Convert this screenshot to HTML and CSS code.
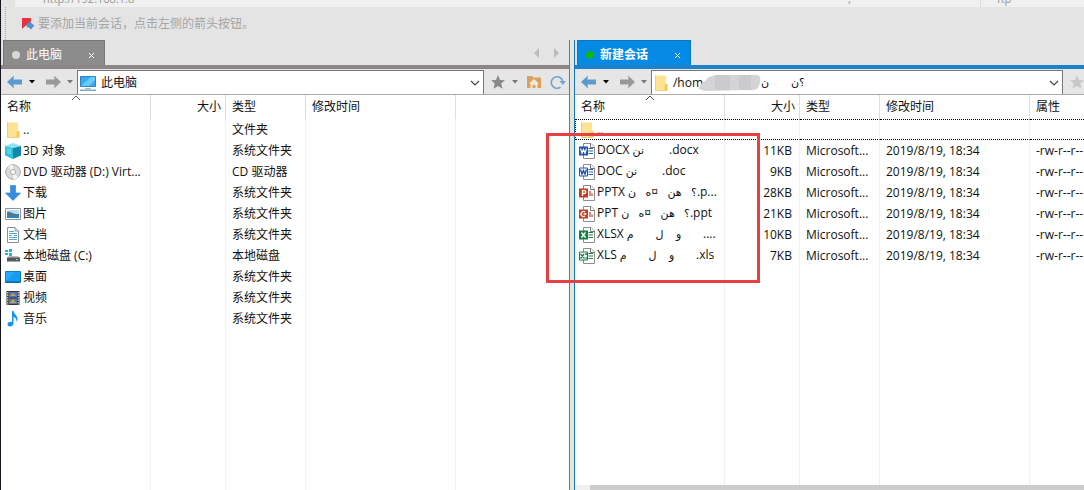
FILE: index.html
```html
<!DOCTYPE html>
<html lang="zh-CN">
<head>
<meta charset="utf-8">
<title>新建会话</title>
<link rel="stylesheet" href="styles.css">
</head>
<body>
<svg width="0" height="0" class="defs" aria-hidden="true">
  <symbol id="arrow" viewBox="0 0 16 14"><path d="M0 7 7 0.5 6.4 4.5H15V9.5H6.4L7 13.5Z"/></symbol>
  <symbol id="star" viewBox="0 0 14 14"><path d="M7 0 9 4.9 14 5.3 10.2 8.6 11.5 13.8 7 11 2.5 13.8 3.8 8.6 0 5.3 5 4.9Z"/></symbol>
  <symbol id="caret" viewBox="0 0 6 4"><path d="M0 0H6L3 3.6Z"/></symbol>
  <symbol id="chev" viewBox="0 0 10 6"><path d="M1 1 5 5 9 1" fill="none" stroke="#444" stroke-width="1.2"/></symbol>
  <symbol id="folder" viewBox="0 0 16 16"><path d="M2 0.5H13V9H14.500V15.500H2Z" fill="#ffe391"/><path d="M12.500 9h2v6.500h-3V11z" fill="#f3cb62"/><path d="M2.500 .5V15.500H14" fill="none" stroke="#f0cf70"/></symbol>
  <symbol id="page" viewBox="0 0 16 16"><path d="M4.500 .5H12L15.500 4V15.500H4.500Z" fill="#fff" stroke="#8d8d8d"/><path d="M11.500 .5V4.500H15.500" fill="#fff" stroke="#777"/></symbol>
</svg>
<div class="app">
  <div class="address">
    <span class="url">http://192.168.1.8</span><span class="mid">,</span><span class="pw">ftp</span>
  </div>
  <div class="hint">
    <svg width="14" height="14" viewBox="0 0 14 14"><path d="M1 1H10V12L5.500 8 1 12Z" fill="#e8323e"/><path d="M5 8 9.500 3.500V5.500L13.500 8.500 9.500 13V10.500H6.500Z" fill="#4f92cf"/></svg>
    <span>要添加当前会话，点击左侧的箭头按钮。</span>
  </div>
  <main class="panes">
    <section class="pane local">
      <div class="tabs">
        <div class="tab"><i class="dot"></i><span>此电脑</span><button aria-label="关闭"><svg width="7" height="7" viewBox="0 0 7 7"><path d="M1 1 6 6M6 1 1 6" stroke="#fff"/></svg></button></div>
        <div class="scroll">
          <button aria-label="左"><svg width="6" height="10" viewBox="0 0 6 10"><path d="M5 0V10L0 5Z" fill="#bbb"/></svg></button>
          <button aria-label="右"><svg width="6" height="10" viewBox="0 0 6 10"><path d="M0 0V10L5 5Z" fill="#bbb"/></svg></button>
        </div>
      </div>
      <div class="toolbar">
        <div class="nav">
          <button aria-label="后退"><svg class="back" width="16" height="14"><use href="#arrow"/></svg></button>
          <button aria-label="后退历史"><svg width="6" height="4"><use href="#caret"/></svg></button>
          <button aria-label="前进"><svg class="fwd" width="16" height="14"><use href="#arrow"/></svg></button>
          <button aria-label="前进历史"><svg class="dim" width="6" height="4"><use href="#caret"/></svg></button>
        </div>
        <div class="path">
          <svg width="18" height="16" viewBox="0 0 18 16"><path d="M1.500 1.500H16.500V11.500H1.500Z" fill="#35adf3" stroke="#3282b5"/><path d="M2 11 12 2H16V5L10 11Z" fill="#6bcbfb"/><path d="M6 13.500H12" stroke="#a5bdca"/><path d="M1 15.200H17" stroke="#5894b5" stroke-width="1.200"/></svg>
          <input aria-label="本地路径" value="此电脑">
          <button aria-label="展开"><svg width="10" height="6"><use href="#chev"/></svg></button>
        </div>
        <div class="tools">
          <button aria-label="书签"><svg class="star" width="14" height="14"><use href="#star"/></svg></button>
          <button aria-label="书签列表"><svg class="dim" width="6" height="4"><use href="#caret"/></svg></button>
          <button class="home" aria-label="主文件夹"><svg width="14" height="12" viewBox="0 0 14 12"><path d="M0 0H5L6 1.500H14V12H0Z" fill="#d9a05e"/><path d="M7 3 12 7.500H10.500V12H8.500V9H5.500V12H3.500V7.500H2Z" fill="#f5e7d4"/></svg></button>
          <button class="home" aria-label="刷新"><svg width="16" height="14" viewBox="0 0 16 14"><path d="M10.500 12.200A5.800 5.800 0 1 1 12.800 6.500" fill="none" stroke="#71a5cf" stroke-width="1.600"/><path d="M9.500 6H16L12.800 10Z" fill="#71a5cf"/></svg></button>
        </div>
      </div>
      <div class="list">
        <svg class="sort" width="10" height="6" viewBox="0 0 10 6"><path d="M1 5 5 1 9 5" fill="none" stroke="#555"/></svg>
        <table>
          <colgroup><col class="c-name"><col class="c-size"><col class="c-type"><col class="c-date"><col></colgroup>
          <thead><tr><th>名称</th><th class="num">大小</th><th>类型</th><th>修改时间</th><th></th></tr></thead>
          <tbody>
            <tr><td><span class="file"><svg width="16" height="16"><use href="#folder"/></svg>..</span></td><td></td><td>文件夹</td><td></td><td></td></tr>
            <tr><td><span class="file"><svg width="16" height="16" viewBox="0 0 16 16"><path d="M0 3 8 0 16 3 8 5Z" fill="#8de5f4"/><path d="M0 3 8 5V16L0 12.500Z" fill="#2fc0dc"/><path d="M8 5 16 3V12.500L8 16Z" fill="#1687ac"/><path d="M2 5 6 6V12L2 10Z" fill="#55d4e8"/></svg>3D 对象</span></td><td></td><td>系统文件夹</td><td></td><td></td></tr>
            <tr><td><span class="file"><svg width="16" height="16" viewBox="0 0 16 16"><circle cx="8" cy="8" r="7.300" fill="#d9d9d9" stroke="#a8a8a8"/><path d="M8 8 3 2.500A7 7 0 0 1 8 1ZM8 8 13 13.500A7 7 0 0 1 8 15Z" fill="#f4f4f4"/><circle cx="8" cy="8" r="2.500" fill="#fff" stroke="#aaa"/></svg>DVD 驱动器 (D:) Virt...</span></td><td></td><td>CD 驱动器</td><td></td><td></td></tr>
            <tr><td><span class="file"><svg width="16" height="16" viewBox="0 0 16 16"><path d="M5.500 .5H10.500V8H15.500L8 15.500 .5 8H5.500Z" fill="#348de0" stroke="#2678c8" stroke-width=".6"/></svg>下载</span></td><td></td><td>系统文件夹</td><td></td><td></td></tr>
            <tr><td><span class="file"><svg width="16" height="16" viewBox="0 0 16 16"><path d="M.5 2.500H15.500V13.500H.5Z" fill="#fff" stroke="#8a9298"/><path d="M2 4H14V12H2Z" fill="#b7dcf1"/><path d="M2 6C6 5 8 9 14 8V12H2Z" fill="#4a7994"/><path d="M2 10H14V12H2Z" fill="#2d86bd"/></svg>图片</span></td><td></td><td>系统文件夹</td><td></td><td></td></tr>
            <tr><td><span class="file"><svg width="16" height="16" viewBox="0 0 16 16"><path d="M2.500 .5H10L13.500 4V15.500H2.500Z" fill="#fff" stroke="#87939b"/><path d="M10 .5V4H13.500" fill="none" stroke="#87939b"/><path d="M4 4.500H9M4 6.500H12M4 8.500H7M9 8.500H12M4 10.500H12M4 12.500H12" stroke="#58a5d0"/></svg>文档</span></td><td></td><td>系统文件夹</td><td></td><td></td></tr>
            <tr><td><span class="file"><svg width="16" height="16" viewBox="0 0 16 16"><path d="M0 2H3V4H0ZM4 1H7V4H4ZM0 5H3V7H0ZM4 5H7V8H4Z" fill="#20b2d8"/><path d="M4 8H13L15 10H2Z" fill="#b9bcbd"/><path d="M2 9.500H15V13.500H2Z" fill="#53585a"/><path d="M11 11.500H13" stroke="#7fea7b"/></svg>本地磁盘 (C:)</span></td><td></td><td>本地磁盘</td><td></td><td></td></tr>
            <tr><td><span class="file"><svg width="16" height="16" viewBox="0 0 16 16"><path d="M.5 2.500H15.500V13.500H.5Z" fill="#159bf0" stroke="#1678bd"/><path d="M1 12V3H10Z" fill="#22aaff"/><path d="M1 13H15" stroke="#0b5e9d"/></svg>桌面</span></td><td></td><td>系统文件夹</td><td></td><td></td></tr>
            <tr><td><span class="file"><svg width="16" height="16" viewBox="0 0 16 16"><path d="M1.500 1H14.500V15H1.500Z" fill="#353535"/><path d="M2.800 2V15M13.200 2V15" stroke="#fff" stroke-dasharray="1.500 1"/><path d="M4 2H12V7.500H4Z" fill="#4c75b9"/><path d="M4 8.500H12V14H4Z" fill="#587aa8"/><path d="M5 6 8 3 11 6ZM5 13 8 9 11 13Z" fill="#d1a243"/></svg>视频</span></td><td></td><td>系统文件夹</td><td></td><td></td></tr>
            <tr><td><span class="file"><svg width="16" height="16" viewBox="0 0 16 16"><path d="M7 0H8.500C9 3 13 4.500 12.500 9L11.500 10.500C11.500 7.500 10 6.500 8.500 6V12.500C8.500 16 2.500 16.500 2.500 13.500 2.500 11 5 10.500 7 11Z" fill="#1a93e6"/></svg>音乐</span></td><td></td><td>系统文件夹</td><td></td><td></td></tr>
            <tr class="fill"><td></td><td></td><td></td><td></td><td></td></tr>
          </tbody>
        </table>
      </div>
    </section>
    <section class="pane remote">
      <div class="tabs">
        <div class="tab"><i class="dot"></i><span>新建会话</span><button aria-label="关闭"><svg width="7" height="7" viewBox="0 0 7 7"><path d="M1 1 6 6M6 1 1 6" stroke="#fff"/></svg></button></div>
      </div>
      <div class="toolbar">
        <div class="nav">
          <button aria-label="后退"><svg class="back" width="16" height="14"><use href="#arrow"/></svg></button>
          <button aria-label="后退历史"><svg width="6" height="4"><use href="#caret"/></svg></button>
          <button aria-label="前进"><svg class="fwd" width="16" height="14"><use href="#arrow"/></svg></button>
          <button aria-label="前进历史"><svg class="dim" width="6" height="4"><use href="#caret"/></svg></button>
        </div>
        <div class="path">
          <svg width="16" height="16"><use href="#folder"/></svg>
          <div class="crumb">/hom<svg class="smudge" width="62" height="18" viewBox="0 0 62 18"><path d="M0 15C1 9 4 9 7 6 10 1 18 1 24 1H54C61 0 62 3 61 8 60 14 58 17 50 16L6 17Z" fill="#d4d4d6"/><path d="M16 1H31V16H16ZM40 1H52V16H40Z" fill="#cbcbcd"/></svg><bdi>ن</bdi>&nbsp;&nbsp;&nbsp;&nbsp;&nbsp;&nbsp;&nbsp;<bdi>ن</bdi><bdi>؟</bdi></div>
          <button aria-label="展开"><svg width="10" height="6"><use href="#chev"/></svg></button>
        </div>
        <div class="tools"><button aria-label="书签"><svg class="star off" width="14" height="14"><use href="#star"/></svg></button></div>
      </div>
      <div class="list">
        <svg class="sort" width="10" height="6" viewBox="0 0 10 6"><path d="M1 5 5 1 9 5" fill="none" stroke="#555"/></svg>
        <table>
          <colgroup><col class="c-name"><col class="c-size"><col class="c-type"><col class="c-date"><col></colgroup>
          <thead><tr><th>名称</th><th class="num">大小</th><th>类型</th><th>修改时间</th><th>属性</th></tr></thead>
          <tbody>
            <tr class="focus"><td><span class="file"><svg width="16" height="16"><use href="#folder"/></svg>..</span></td><td></td><td></td><td></td><td></td></tr>
            <tr><td><span class="file"><svg width="16" height="16" viewBox="0 0 16 16"><use href="#page"/><path d="M9.500 5.500H14M9.500 8H14M9.500 10.500H14" stroke="#2b5fb5"/><path d="M0 3.500H9V12.500H0Z" fill="#1f55b0"/><path d="M1.500 5.500 3 10 4.500 6.500 6 10 7.500 5.500" fill="none" stroke="#fff" stroke-width="1.200"/></svg><span>DOCX <bdi>نن</bdi>&nbsp;&nbsp;&nbsp;&nbsp;&nbsp;&nbsp;&nbsp;&nbsp;.docx</span></span></td><td class="num">11KB</td><td>Microsoft...</td><td>2019/8/19, 18:34</td><td>-rw-r--r--</td></tr>
            <tr><td><span class="file"><svg width="16" height="16" viewBox="0 0 16 16"><use href="#page"/><path d="M9.500 5.500H14M9.500 8H14M9.500 10.500H14" stroke="#2b5fb5"/><path d="M.5 4H8.500V12H.5Z" fill="#fff" stroke="#1f55b0"/><path d="M1.500 5.500 3 10 4.500 6.500 6 10 7.500 5.500" fill="none" stroke="#1f55b0" stroke-width="1.400"/></svg><span>DOC <bdi>نن</bdi>&nbsp;&nbsp;&nbsp;&nbsp;&nbsp;&nbsp;&nbsp;&nbsp;.doc</span></span></td><td class="num">9KB</td><td>Microsoft...</td><td>2019/8/19, 18:34</td><td>-rw-r--r--</td></tr>
            <tr><td><span class="file"><svg width="16" height="16" viewBox="0 0 16 16"><use href="#page"/><path d="M10 6V11H14V8.500H12V6Z" fill="#e2897a"/><path d="M0 3.500H9V12.500H0Z" fill="#c43d20"/><path d="M3.500 11V5.700H5.500C7.200 5.700 7.200 8.500 5.500 8.500H3.500" fill="none" stroke="#fff" stroke-width="1.300"/></svg><span>PPTX <bdi>ن</bdi>&nbsp;&nbsp;&nbsp;<bdi>ه</bdi>¤&nbsp;&nbsp;&nbsp;<bdi>هن</bdi>&nbsp;&nbsp;&nbsp;<bdi>؟</bdi>.p...</span></span></td><td class="num">28KB</td><td>Microsoft...</td><td>2019/8/19, 18:34</td><td>-rw-r--r--</td></tr>
            <tr><td><span class="file"><svg width="16" height="16" viewBox="0 0 16 16"><use href="#page"/><path d="M10 6V11H14V8.500H12V6Z" fill="#e2897a"/><path d="M0 3.500H9V12.500H0Z" fill="#c43d20"/><path d="M6 6A2.500 2.500 0 1 0 6 10M4.500 8H7.500" fill="none" stroke="#fff" stroke-width="1.300"/></svg><span>PPT <bdi>ن</bdi>&nbsp;&nbsp;&nbsp;<bdi>ه</bdi>¤&nbsp;&nbsp;&nbsp;<bdi>هن</bdi>&nbsp;&nbsp;&nbsp;<bdi>؟</bdi>.ppt</span></span></td><td class="num">21KB</td><td>Microsoft...</td><td>2019/8/19, 18:34</td><td>-rw-r--r--</td></tr>
            <tr><td><span class="file"><svg width="16" height="16" viewBox="0 0 16 16"><use href="#page"/><path d="M9.500 5.500H14M9.500 8H14M9.500 10.500H14" stroke="#21803f"/><path d="M0 3.500H9V12.500H0Z" fill="#128044"/><path d="M2.500 5.500 6.500 10.500M6.500 5.500 2.500 10.500" stroke="#fff" stroke-width="1.400"/></svg><span>XLSX <bdi>م</bdi>&nbsp;&nbsp;&nbsp;&nbsp;&nbsp;&nbsp;&nbsp;<bdi>ل</bdi>&nbsp;&nbsp;&nbsp;&nbsp;<bdi>و</bdi>&nbsp;&nbsp;&nbsp;&nbsp;&nbsp;&nbsp;&nbsp;....</span></span></td><td class="num">10KB</td><td>Microsoft...</td><td>2019/8/19, 18:34</td><td>-rw-r--r--</td></tr>
            <tr><td><span class="file"><svg width="16" height="16" viewBox="0 0 16 16"><use href="#page"/><path d="M9.500 5.500H14M9.500 8H14M9.500 10.500H14" stroke="#21803f"/><path d="M.5 4H8.500V12H.5Z" fill="#fff" stroke="#128044"/><path d="M1.500 6 5.500 10.500M5 6 1.500 10.500M6 6H8M6.500 10H8" stroke="#128044" stroke-width="1.300"/></svg><span>XLS <bdi>م</bdi>&nbsp;&nbsp;&nbsp;&nbsp;&nbsp;&nbsp;&nbsp;<bdi>ل</bdi>&nbsp;&nbsp;&nbsp;&nbsp;<bdi>و</bdi>&nbsp;&nbsp;&nbsp;&nbsp;&nbsp;&nbsp;&nbsp;.xls</span></span></td><td class="num">7KB</td><td>Microsoft...</td><td>2019/8/19, 18:34</td><td>-rw-r--r--</td></tr>
            <tr class="fill"><td></td><td></td><td></td><td></td><td></td></tr>
          </tbody>
        </table>
      </div>
      <div class="hscroll"><i></i></div>
      <div class="highlight"></div>
    </section>
  </main>
</div>
</body>
</html>
```
FILE: styles.css
```css
* { box-sizing: border-box; }
body {
  margin: 0;
  font: 12px/16px "Open Sans", "Noto Sans CJK SC", "DejaVu Sans", sans-serif;
  color: #111;
  background: #e4e4e4;
}
.defs { position: absolute; }
svg { display: block; flex: none; }
button { border: 0; padding: 0; background: none; display: flex; align-items: center; flex: none; }
bdi { font-family: "DejaVu Sans", sans-serif; font-size: 11px; }
.app { height: 100vh; display: flex; flex-direction: column; overflow: hidden; border-left: 1px solid #15151f; }
.address {
  flex: none; height: 7px; margin-left: 14px; padding: 0 0 0 28px;
  display: flex; align-items: flex-end; overflow: hidden; background: #f0f0f0; color: #999; font-size: 11px;
}
.url { flex: 1; }
.mid { width: 132px; }
.pw { width: 104px; border-left: 1px solid #ddd; padding-left: 16px; }
.hint {
  flex: none; height: 33px; padding-left: 15px; margin-left: 4px; border-left: 1px dotted #aaa;
  display: flex; align-items: center; gap: 3px; color: #a5a5a5;
}
.panes { flex: 1; min-height: 0; display: flex; gap: 4px; }
.pane { position: relative; min-width: 0; display: flex; flex-direction: column; }
.local { flex: 569; border-right: 1px solid #777; }
.remote { flex: 510; border-left: 1px solid #1177bb; }
.tabs { flex: none; height: 29px; display: flex; justify-content: space-between; border-bottom: 4px solid #8b8787; padding-left: 2px; }
.remote .tabs { border-color: #1b82cb; }
.tab {
  height: 25px; width: 102px; padding: 4px 9px 0 8px; display: flex; align-items: center;
  background: #8c8c8c; border: 1px solid #777; border-bottom: 0; color: #fff;
}
.tab span { flex: 1; }
.remote .tab { width: 114px; background: #048ae4; border-color: #0678c6; font-weight: 700; }
.dot { width: 8px; height: 8px; border-radius: 4px; background: #d8d8d8; margin-right: 6px; }
.remote .dot { background: #0cb814; }
.scroll { display: flex; gap: 14px; padding-right: 9px; }
.toolbar { flex: none; height: 26px; display: flex; border-bottom: 1px solid #aaa; background: #e6e6e6; }
.nav { width: 76px; padding: 0 6px; display: flex; align-items: center; gap: 6px; }
.nav button:nth-child(3) { margin-left: 4px; }
.back { fill: #5b9bd0; }
.fwd { fill: #999; transform: scaleX(-1); }
.dim { fill: #777; }
.path {
  flex: 1; min-width: 0; margin-top: 1px; padding: 0 3px 0 1px; display: flex; align-items: center; gap: 4px;
  background: #fff; border: 1px solid #777; border-bottom: 0;
}
.path input { flex: 1; min-width: 0; border: 0; padding: 0; font: inherit; color: inherit; background: none; }
.crumb { flex: 1; display: flex; align-items: center; white-space: pre; }
.smudge { margin-left: -4px; }
.tools { display: flex; align-items: center; gap: 7px; padding: 0 3px 0 7px; }
.home { margin-left: 2px; }
.star { fill: #888; }
.star.off { fill: #c8c8c8; }
.remote .tools { width: 21px; overflow: hidden; }
.list { flex: 1; min-height: 0; position: relative; background: #fff; }
.sort { position: absolute; left: 70px; top: 0; }
table { width: 100%; height: 100%; table-layout: fixed; border-collapse: separate; border-spacing: 0; }
.c-name, .c-date { width: 150px; }
.c-size { width: 75px; }
.c-type { width: 80px; }
th { height: 24px; padding: 0 6px; font-weight: 400; text-align: left; border-right: 1px solid #ddd; }
td { height: 21px; padding: 0 6px; border-right: 1px solid #eef1f6; white-space: nowrap; overflow: hidden; }
th:last-child, td:last-child { border-right: 0; }
td:first-child { padding: 0 0 0 4px; }
th.num { text-align: right; padding-right: 4px; }
td.num { text-align: right; padding-right: 7px; }
.file { display: flex; align-items: center; gap: 2px; white-space: pre; }
.focus td { border-top: 1px dotted #000; border-bottom: 1px dotted #000; }
.focus td:first-child { border-left: 1px dotted #000; padding-left: 3px; }
.fill td { height: auto; }
.hscroll { flex: none; height: 5px; padding-left: 15px; background: #f0f0f0; }
.hscroll i { display: block; height: 5px; background: #cdcdcd; }
.highlight { position: absolute; left: -29px; top: 93px; width: 214px; height: 150px; border: 3px solid #e84040; }
```
